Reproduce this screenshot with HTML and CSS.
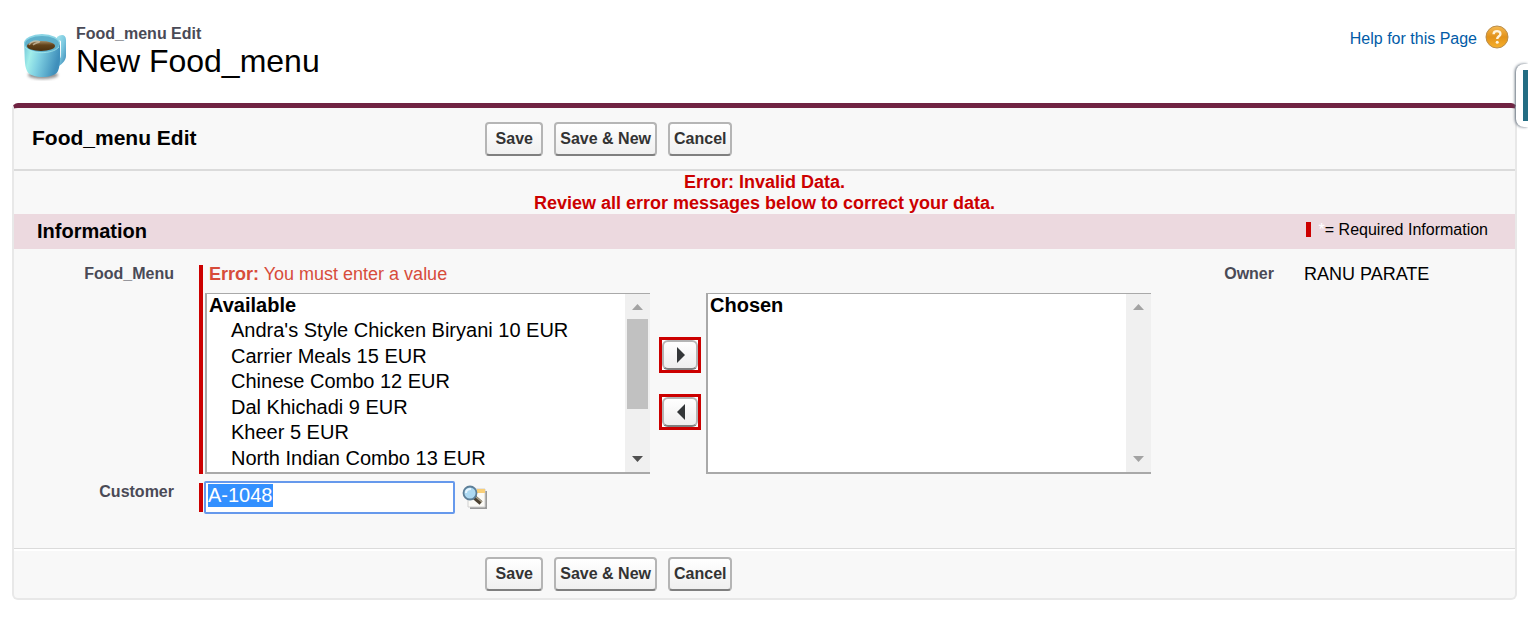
FILE: index.html
```html
<!DOCTYPE html>
<html lang="en">
<head>
<meta charset="utf-8">
<title>Food_menu Edit: New Food_menu</title>
<link rel="stylesheet" href="styles.css">
<script src="script.js" defer></script>
</head>
<body>
<header class="page-header">
  <svg class="cup" width="44" height="48" viewBox="0 0 44 48" aria-hidden="true">
    <defs>
      <linearGradient id="body" x1="0" x2="1" y1="0" y2="0.25">
        <stop offset="0" stop-color="#6fc4d8"/><stop offset="0.25" stop-color="#a2eeea"/>
        <stop offset="0.5" stop-color="#7fd0e2"/><stop offset="1" stop-color="#3f8fbb"/>
      </linearGradient>
      <linearGradient id="handle" x1="0" x2="1" y1="0" y2="1">
        <stop offset="0" stop-color="#a9e8ef"/><stop offset="0.5" stop-color="#7cc9e0"/><stop offset="1" stop-color="#3583b4"/>
      </linearGradient>
      <linearGradient id="coffee" x1="0" x2="0" y1="0" y2="1">
        <stop offset="0" stop-color="#a08a64"/><stop offset="0.4" stop-color="#63431b"/><stop offset="1" stop-color="#4a2f0e"/>
      </linearGradient>
      <filter id="soft" x="-20%" y="-50%" width="140%" height="200%"><feGaussianBlur stdDeviation="1.4"/></filter>
    </defs>
    <ellipse cx="20" cy="42" rx="15" ry="4" fill="#555" opacity="0.65" filter="url(#soft)"/>
    <path d="M34 4c4-3 9-3 9 3v16c0 5-5 9-10 12l1-6c2-2 4-4 4-7V9c0-2-2-2-4 0z" fill="url(#handle)"/>
    <path d="M1 9C2 22 1 32 4 38c4 8 27 8 31 0 3-7 2-18 2-29z" fill="url(#body)"/>
    <ellipse cx="19" cy="10" rx="18" ry="9" fill="#8bd5e5"/>
    <ellipse cx="19" cy="11" rx="17" ry="8" fill="#5fb0cb"/>
    <ellipse cx="18" cy="13" rx="14" ry="5" fill="url(#coffee)"/>
    <path d="M6 12c2-4 7-5 11-3M10 12c2-2 4-2 6-3" fill="none" stroke="#d5c8ae" stroke-width="1.5" opacity="0.7"/>
    <path d="M2 14c5 7 27 8 34 0" fill="none" stroke="#a4e9ee" stroke-width="1" opacity="0.8"/>
  </svg>
  <div class="page-title">
    <p class="page-type">Food_menu Edit</p>
    <h1 class="page-name">New Food_menu</h1>
  </div>
  <a class="help" href="#">Help for this Page
    <svg width="24" height="24" viewBox="0 0 24 24" aria-hidden="true">
      <defs><linearGradient id="gold" x1="0" x2="0" y1="0" y2="1">
        <stop offset="0" stop-color="#f5b952"/><stop offset="0.5" stop-color="#e2921a"/><stop offset="1" stop-color="#f7b02a"/>
      </linearGradient></defs>
      <circle cx="12" cy="12" r="11" fill="url(#gold)" stroke="#b98d4c" stroke-width="1"/>
      <path d="M8.600 9.200c0-4.200 6.800-4 6.800-.3 0 2.400-3.200 2.300-3.200 5" fill="none" stroke="#fff3dc" stroke-width="2.400"/>
      <circle cx="12.200" cy="17.200" r="1.500" fill="#fff3dc"/>
    </svg>
  </a>
</header>

<button class="side-tab" type="button" aria-label="Open sidebar"><span class="side-tab-face"></span></button>

<form class="panel">
  <div class="bar bar-top">
    <h2 class="bar-title">Food_menu Edit</h2>
    <div class="actions">
      <button class="btn" type="button">Save</button>
      <button class="btn" type="button">Save &amp; New</button>
      <button class="btn" type="button">Cancel</button>
    </div>
  </div>

  <div class="errors" role="alert">Error: Invalid Data.<br>Review all error messages below to correct your data.</div>

  <div class="section-head">
    <h3 class="section-title">Information</h3>
    <p class="legend"><span class="legend-mark"></span><span class="legend-star">*</span>= Required Information</p>
  </div>

  <div class="fields">
    <label class="label" for="available">Food_Menu</label>
    <div class="required">
      <p class="field-error"><strong>Error:</strong> You must enter a value</p>
      <div class="picker">
        <div class="list-box">
          <select class="list" id="available" multiple>
            <optgroup class="group" label="Available">
              <option>Andra's Style Chicken Biryani 10 EUR</option>
              <option>Carrier Meals 15 EUR</option>
              <option>Chinese Combo 12 EUR</option>
              <option>Dal Khichadi 9 EUR</option>
              <option>Kheer 5 EUR</option>
              <option>North Indian Combo 13 EUR</option>
            </optgroup>
          </select>
          <div class="scrollbar" aria-hidden="true">
            <svg width="25" height="25" viewBox="0 0 25 25"><path d="M7 16l5.500-6 5.500 6z" fill="#a3a3a3"/></svg>
            <div class="track"><div class="thumb"></div></div>
            <svg width="25" height="25" viewBox="0 0 25 25"><path d="M7 9l5.500 6 5.500-6z" fill="#505050"/></svg>
          </div>
        </div>
        <div class="movers">
          <button class="mover" type="button" aria-label="Add"><svg width="32" height="26" viewBox="0 0 32 26"><path d="M13 5l8 8-8 8z" fill="#333638"/></svg></button>
          <button class="mover" type="button" aria-label="Remove"><svg width="32" height="26" viewBox="0 0 32 26"><path d="M21 5l-8 8 8 8z" fill="#333638"/></svg></button>
        </div>
        <div class="list-box">
          <select class="list" aria-label="Chosen" multiple>
            <optgroup class="group" label="Chosen"></optgroup>
          </select>
          <div class="scrollbar" aria-hidden="true">
            <svg width="25" height="25" viewBox="0 0 25 25"><path d="M7 16l5.500-6 5.500 6z" fill="#a3a3a3"/></svg>
            <div class="track"></div>
            <svg width="25" height="25" viewBox="0 0 25 25"><path d="M7 9l5.500 6 5.500-6z" fill="#a3a3a3"/></svg>
          </div>
        </div>
      </div>
    </div>
    <dl class="owner">
      <dt class="label">Owner</dt>
      <dd class="owner-name">RANU PARATE</dd>
    </dl>

    <label class="label" for="customer">Customer</label>
    <div class="required lookup">
      <input class="lookup-input" id="customer" type="text" value="A-1048" autofocus>
      <button class="lookup-btn" type="button" aria-label="Customer lookup">
        <svg width="26" height="26" viewBox="0 0 26 26">
          <path d="M8 6h17v18H8z" fill="#999"/>
          <path d="M6 4h17v18H6z" fill="#fbfaf6" stroke="#d0d0d0"/>
          <path d="M15 4h8v4h-8z" fill="#f9cf78"/>
          <path d="M12 12l7 6" stroke="#4b4030" stroke-width="4.500"/>
          <path d="M14 12l6 5" stroke="#aaa18c" stroke-width="1.500"/>
          <circle cx="8" cy="8" r="6.500" fill="#add9f2" stroke="#5d7f98" stroke-width="1.800"/>
          <path d="M4 8c0-3 2-4 5-4" fill="none" stroke="#e6f6ff" stroke-width="2"/>
        </svg>
      </button>
    </div>
  </div>

  <div class="bar bar-bottom">
    <div class="actions">
      <button class="btn" type="button">Save</button>
      <button class="btn" type="button">Save &amp; New</button>
      <button class="btn" type="button">Cancel</button>
    </div>
  </div>
</form>
</body>
</html>
```
FILE: styles.css
```css
* { box-sizing: border-box; }

body {
  margin: 0;
  padding: 24px 11px 0 12px;
  background: #fff;
  color: #000;
  font: 16px/20px "Liberation Sans", Arial, sans-serif;
}

h1, h2, h3, p, dl, dd { margin: 0; }

.page-header {
  display: flex;
  align-items: flex-start;
  height: 79px;
  padding: 0 8px 0 11px;
}

.cup { margin-top: 9px; }

.page-title { margin-left: 9px; }

.page-type {
  color: #4a4a56;
  font-weight: bold;
}

.page-name {
  font-size: 32px;
  font-weight: normal;
  line-height: 34px;
}

.help {
  display: flex;
  align-items: center;
  gap: 8px;
  margin-left: auto;
  color: #015ba7;
  line-height: 30px;
  text-decoration: none;
}

.help svg { margin-bottom: 5px; }

.side-tab {
  position: absolute;
  top: 64px;
  right: 0;
  width: 12px;
  height: 63px;
  padding: 6px 0 6px 7px;
  border: 0;
  border-radius: 8px 0 0 8px;
  background: #fff;
  box-shadow: -1px 0 3px #5f6b78;
}

.side-tab-face {
  display: block;
  height: 100%;
  background: #236d83;
}

.panel {
  border: 2px solid #e8e8e8;
  border-top: 5px solid #702342;
  border-radius: 6px;
  background: #f8f8f8;
}

.bar {
  display: flex;
  align-items: center;
}

.bar-top {
  height: 63px;
  border-bottom: 2px solid #dbdbdb;
}

.bar-bottom {
  height: 50px;
  border-top: 1px solid #dbdbdb;
  box-shadow: inset 0 2px #fff;
}

.bar-title {
  width: 31%;
  padding: 0 0 2px 18px;
  font-size: 21px;
  line-height: 24px;
}

.actions {
  display: flex;
  gap: 11px;
  padding-left: 6px;
}

.bar-bottom .actions { margin-left: 31%; }

.btn {
  height: 34px;
  padding: 0 4px;
  min-width: 58px;
  border: 2px solid #b5b5b5;
  border-bottom-color: #7f7f7f;
  border-radius: 4px;
  background: linear-gradient(#fff, #f0f0f0);
  color: #333;
  font: bold 16px/20px "Liberation Sans", Arial, sans-serif;
}

.errors {
  padding-top: 1px;
  color: #c00;
  font-size: 18px;
  font-weight: bold;
  line-height: 21px;
  text-align: center;
}

.section-head {
  display: flex;
  align-items: center;
  justify-content: space-between;
  height: 35px;
  padding: 0 27px 2px 23px;
  background: #ecd9df;
}

.section-title { font-size: 20px; }

.legend {
  display: flex;
  align-items: center;
  padding-bottom: 2px;
}

.legend-mark {
  width: 5px;
  height: 15px;
  margin-right: 8px;
  background: #c00;
}

.legend-star { color: #fff; }

.fields {
  display: grid;
  grid-template-columns: 160px auto 1fr;
  column-gap: 25px;
  row-gap: 9px;
  padding: 16px 0 36px;
}

.label {
  color: #4a4a56;
  font-weight: bold;
  line-height: 17px;
  text-align: right;
}

.required { border-left: 4px solid #c00; }

.field-error {
  padding: 0 0 10px 6px;
  color: #d74c3b;
  font-size: 18px;
  line-height: 18px;
}

.picker {
  display: flex;
  align-items: center;
  padding-left: 2px;
}

.list-box {
  display: flex;
  width: 445px;
  height: 181px;
  border: solid #a9a9a9;
  border-width: 1px 0 2px 2px;
  background: #fff;
}

.list {
  flex: 1;
  min-width: 0;
  padding: 0;
  border: 0;
  outline: 0;
  background: #fff;
  color: #000;
  font: 20px/23px "Liberation Sans", Arial, sans-serif;
  overflow: hidden;
}

.group { font-weight: bold; }

.list option {
  min-height: 25px;
  padding: 0 0 2px 24px;
  font-weight: normal;
}

.list option:nth-child(odd) { min-height: 26px; }

.scrollbar {
  display: flex;
  flex-direction: column;
  width: 25px;
  background: #f0f0f0;
}

.track {
  flex: 1;
  padding: 0 2px;
}

.thumb {
  height: 70%;
  background: #c1c1c1;
}

.movers {
  display: flex;
  flex-direction: column;
  gap: 21px;
  padding: 0 5px 0 9px;
}

.mover {
  width: 42px;
  height: 36px;
  padding: 0;
  border: 3px solid #c00;
  background: #fff;
}

.mover svg {
  display: block;
  width: 36px;
  height: 30px;
  border: 2px solid #b5b5b5;
  border-bottom-color: #7f7f7f;
  border-radius: 6px;
  background: linear-gradient(#fff, #eee);
}

.owner {
  display: flex;
  justify-content: flex-end;
  gap: 30px;
  padding-right: 27px;
}

.owner-name {
  width: 184px;
  font-size: 18px;
  line-height: 18px;
}

.lookup {
  display: flex;
  align-items: center;
  gap: 7px;
  height: 29px;
  padding-left: 1px;
}

.lookup-input {
  width: 251px;
  height: 33px;
  padding: 0 2px 4px;
  border: 2px solid #6699ec;
  border-radius: 2px;
  outline: 0;
  background: #fff;
  font: 20px/23px "Liberation Sans", Arial, sans-serif;
}

.lookup-input::selection {
  background: #3390ff;
  color: #fff;
}

.lookup-btn {
  padding: 0;
  border: 0;
  background: none;
}

.lookup-btn svg { display: block; }
```
FILE: script.js
```js
const customer = document.getElementById("customer");
customer.focus();
customer.select();
```
